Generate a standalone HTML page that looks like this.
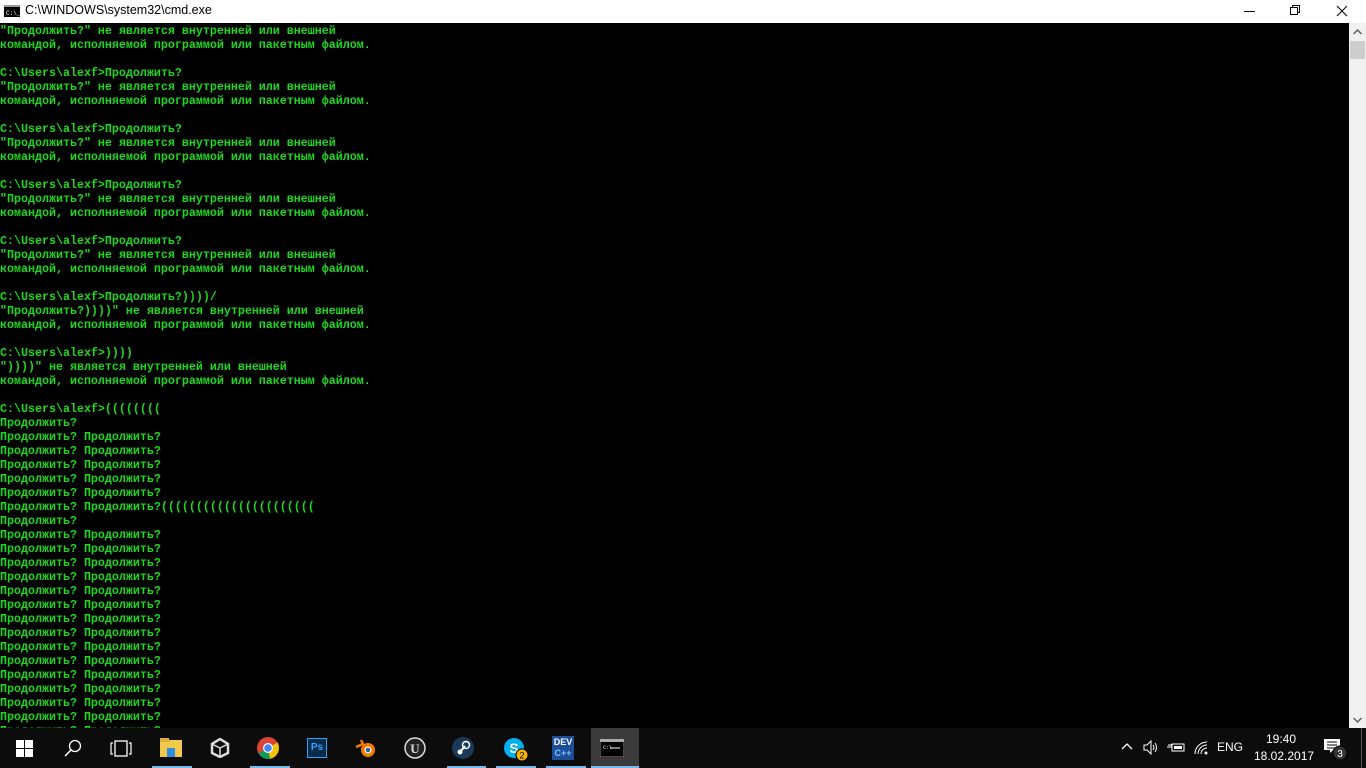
<!DOCTYPE html>
<html><head><meta charset="utf-8"><style>
*{margin:0;padding:0;box-sizing:border-box}
body{width:1366px;height:768px;overflow:hidden;background:#000;font-family:"Liberation Sans",sans-serif;position:relative}
#title{position:absolute;left:0;top:0;width:1366px;height:23px;background:#fff}
#title .t{position:absolute;left:25px;top:3px;font-size:12.5px;color:#000}
#con{position:absolute;left:0;top:23px;width:1349px;height:705px;background:#000;overflow:hidden}
pre{font-family:"Liberation Mono","DejaVu Sans Mono",monospace;font-size:11.67px;line-height:14px;color:#1cd81c;font-weight:bold;margin-top:1px;white-space:pre}
#sb{position:absolute;left:1349px;top:23px;width:17px;height:705px;background:#f0f0f0}
#tb{position:absolute;left:0;top:728px;width:1366px;height:40px;background:#0c0c0c}
.ic{position:absolute;top:0;width:48px;height:40px}
.ul{position:absolute;bottom:0;height:2px;background:#76b9ed}
.tray{position:absolute;color:#fff;font-size:12px}
</style></head><body>
<div id="title">
<svg style="position:absolute;left:4px;top:5px" width="16" height="12"><rect width="16" height="12" fill="#000"/><rect x="0" y="0" width="16" height="2" fill="#999"/><text x="2" y="10" font-size="6" fill="#fff" font-family="Liberation Mono">C:\_</text></svg>
<span class="t">C:\WINDOWS\system32\cmd.exe</span>
<svg style="position:absolute;left:1244px;top:6px" width="12" height="12"><line x1="0" y1="5.5" x2="11" y2="5.5" stroke="#000"/></svg>
<svg style="position:absolute;left:1290px;top:5px" width="12" height="12"><rect x="0.5" y="2.5" width="7" height="7" fill="none" stroke="#000"/><path d="M2.5 2.5V0.5H9.5V7.5H7.5" fill="none" stroke="#000"/></svg>
<svg style="position:absolute;left:1336px;top:5px" width="12" height="12"><path d="M1 1L11 11M11 1L1 11" stroke="#000"/></svg>
</div>
<div id="con"><pre>"Продолжить?" не является внутренней или внешней
командой, исполняемой программой или пакетным файлом.

C:\Users\alexf>Продолжить?
"Продолжить?" не является внутренней или внешней
командой, исполняемой программой или пакетным файлом.

C:\Users\alexf>Продолжить?
"Продолжить?" не является внутренней или внешней
командой, исполняемой программой или пакетным файлом.

C:\Users\alexf>Продолжить?
"Продолжить?" не является внутренней или внешней
командой, исполняемой программой или пакетным файлом.

C:\Users\alexf>Продолжить?
"Продолжить?" не является внутренней или внешней
командой, исполняемой программой или пакетным файлом.

C:\Users\alexf>Продолжить?))))/
"Продолжить?))))" не является внутренней или внешней
командой, исполняемой программой или пакетным файлом.

C:\Users\alexf>))))
"))))" не является внутренней или внешней
командой, исполняемой программой или пакетным файлом.

C:\Users\alexf>((((((((
Продолжить?
Продолжить? Продолжить?
Продолжить? Продолжить?
Продолжить? Продолжить?
Продолжить? Продолжить?
Продолжить? Продолжить?
Продолжить? Продолжить?((((((((((((((((((((((
Продолжить?
Продолжить? Продолжить?
Продолжить? Продолжить?
Продолжить? Продолжить?
Продолжить? Продолжить?
Продолжить? Продолжить?
Продолжить? Продолжить?
Продолжить? Продолжить?
Продолжить? Продолжить?
Продолжить? Продолжить?
Продолжить? Продолжить?
Продолжить? Продолжить?
Продолжить? Продолжить?
Продолжить? Продолжить?
Продолжить? Продолжить?
Продолжить? Продолжить?</pre></div>
<div id="sb">
<svg style="position:absolute;left:4px;top:6px" width="9" height="6"><path d="M0.5 5L4.5 1L8.5 5" fill="none" stroke="#606060" stroke-width="1.5"/></svg>
<div style="position:absolute;left:1px;top:18px;width:15px;height:18px;background:#cdcdcd"></div>
<svg style="position:absolute;left:4px;top:694px" width="9" height="6"><path d="M0.5 1L4.5 5L8.5 1" fill="none" stroke="#606060" stroke-width="1.5"/></svg>
</div>
<div id="tb">
<svg style="position:absolute;left:16px;top:12px" width="17" height="17"><rect x="0" y="0" width="8" height="8" fill="#fff"/><rect x="9" y="0" width="8" height="8" fill="#fff"/><rect x="0" y="9" width="8" height="8" fill="#fff"/><rect x="9" y="9" width="8" height="8" fill="#fff"/></svg>
<svg style="position:absolute;left:64px;top:11px" width="18" height="18"><circle cx="11" cy="7" r="5.5" fill="none" stroke="#fff" stroke-width="1.3"/><line x1="7" y1="11" x2="1" y2="17" stroke="#fff" stroke-width="1.5"/></svg>
<svg style="position:absolute;left:110px;top:12px" width="22" height="17"><rect x="5" y="1" width="12" height="15" fill="none" stroke="#fff" stroke-width="1.3"/><path d="M3 3H1V14H3M19 3H21V14H19" fill="none" stroke="#fff" stroke-width="1.2"/></svg>
<div class="ic" style="left:147px"><svg style="position:absolute;left:13px;top:10px" width="22" height="20"><rect x="0" y="2" width="22" height="17" fill="#f2c94c"/><rect x="0" y="0" width="9" height="4" fill="#e0b03c"/><rect x="7" y="10" width="8" height="9" fill="#2d8ee0"/></svg></div>
<div class="ul" style="left:152px;width:40px"></div>
<svg style="position:absolute;left:210px;top:10px" width="20" height="20"><path d="M10 1L18 6V15L10 19L2 15V6Z" fill="none" stroke="#ddd" stroke-width="2.5"/><path d="M10 10L18 6M10 10L2 6M10 10V19" stroke="#ddd" stroke-width="1.5"/></svg>
<svg style="position:absolute;left:257px;top:9px" width="22" height="22"><circle cx="11" cy="11" r="11" fill="#db4437"/><path d="M11 11L1.5 16.5A11 11 0 0 0 13 21.8Z" fill="#0f9d58"/><path d="M11 11L20.5 5.5A11 11 0 0 1 13 21.8Z" fill="#f4c20d"/><circle cx="11" cy="11" r="5" fill="#fff"/><circle cx="11" cy="11" r="3.8" fill="#4285f4"/></svg>
<div class="ul" style="left:250px;width:40px"></div>
<div style="position:absolute;left:307px;top:10px;width:20px;height:20px;background:#0a2a4a;border:1px solid #2fa3f7;color:#2fa3f7;font-size:10px;font-weight:bold;text-align:center;line-height:18px">Ps</div>
<svg style="position:absolute;left:355px;top:10px" width="22" height="20"><circle cx="13" cy="12" r="7" fill="#f57c00"/><circle cx="13" cy="12" r="3.5" fill="#fff"/><circle cx="13" cy="12" r="2.3" fill="#2a62a0"/><path d="M1 9L8 6L6 2" fill="none" stroke="#f57c00" stroke-width="2.5"/></svg>
<svg style="position:absolute;left:404px;top:9px" width="22" height="22"><circle cx="11" cy="11" r="10" fill="#222" stroke="#ddd" stroke-width="1.5"/><text x="11" y="16" font-size="13" fill="#ddd" text-anchor="middle" font-family="Liberation Serif" font-weight="bold">U</text></svg>
<svg style="position:absolute;left:452px;top:9px" width="22" height="22"><circle cx="11" cy="11" r="11" fill="#1b3a5a"/><circle cx="14" cy="8" r="3.5" fill="none" stroke="#fff" stroke-width="1.5"/><circle cx="8" cy="15" r="2.5" fill="#fff"/><line x1="8" y1="15" x2="13" y2="9" stroke="#fff" stroke-width="2"/></svg>
<div class="ul" style="left:447px;width:39px"></div>
<svg style="position:absolute;left:503px;top:9px" width="26" height="26"><circle cx="11" cy="11" r="10" fill="#00aff0"/><text x="11" y="16" font-size="14" fill="#fff" text-anchor="middle" font-weight="bold" font-family="Liberation Sans">S</text><circle cx="19" cy="18" r="6" fill="#f8b200" stroke="#000"/><text x="19" y="21.5" font-size="9" fill="#000" text-anchor="middle" font-family="Liberation Sans">2</text></svg>
<div class="ul" style="left:496px;width:40px"></div>
<div style="position:absolute;left:552px;top:8px;width:22px;height:24px;background:#1e4e9a;color:#fff;font-size:9px;font-weight:bold;text-align:center;line-height:11px;padding-top:1px">DEV<br><span style="color:#7ec0ff">C++</span></div>
<div class="ul" style="left:546px;width:40px"></div>
<div style="position:absolute;left:591px;top:0;width:48px;height:40px;background:#3b3b3b"></div>
<svg style="position:absolute;left:600px;top:11px" width="24" height="18"><rect width="24" height="18" fill="#000" stroke="#888"/><rect width="24" height="3" fill="#aaa"/><text x="3" y="10" font-size="5" fill="#fff" font-family="Liberation Mono">C:\</text><line x1="10" y1="9" x2="20" y2="9" stroke="#fff"/></svg>
<div class="ul" style="left:591px;width:48px"></div>
<svg style="position:absolute;left:1121px;top:14px" width="12" height="8"><path d="M1 7L6 2L11 7" fill="none" stroke="#fff" stroke-width="1.3"/></svg>
<svg style="position:absolute;left:1143px;top:12px" width="16" height="15"><path d="M1 5H4L8 1V14L4 10H1Z" fill="none" stroke="#fff"/><path d="M10 5Q12 7.5 10 10M12 3Q15 7.5 12 12" fill="none" stroke="#fff"/></svg>
<svg style="position:absolute;left:1167px;top:13px" width="18" height="12"><rect x="5" y="3" width="12" height="7" fill="none" stroke="#fff"/><rect x="7" y="5" width="8" height="3" fill="#fff"/><path d="M0 6H5M2 3V5M4 3V5" stroke="#fff"/></svg>
<svg style="position:absolute;left:1193px;top:12px" width="16" height="16"><path d="M2 14A12 12 0 0 1 14 2M5 14A9 9 0 0 1 14 5M8 14A6 6 0 0 1 14 8" fill="none" stroke="#fff"/><circle cx="13" cy="13" r="1.5" fill="#fff"/></svg>
<div class="tray" style="left:1217px;top:12px">ENG</div>
<div class="tray" style="left:1266px;top:4px">19:40</div>
<div class="tray" style="left:1254px;top:21px">18.02.2017</div>
<svg style="position:absolute;left:1323px;top:10px" width="26" height="24"><path d="M1 1H17V12H10L7 15V12H1Z" fill="#fff"/><path d="M4 4H14M4 7H14M4 10H14" stroke="#000"/><circle cx="17" cy="15" r="7" fill="#333" stroke="#000"/><text x="17" y="19" font-size="10" fill="#fff" text-anchor="middle" font-family="Liberation Sans">3</text></svg>
<div style="position:absolute;left:1361px;top:0;width:1px;height:40px;background:#555"></div>
</div>
</body></html>
